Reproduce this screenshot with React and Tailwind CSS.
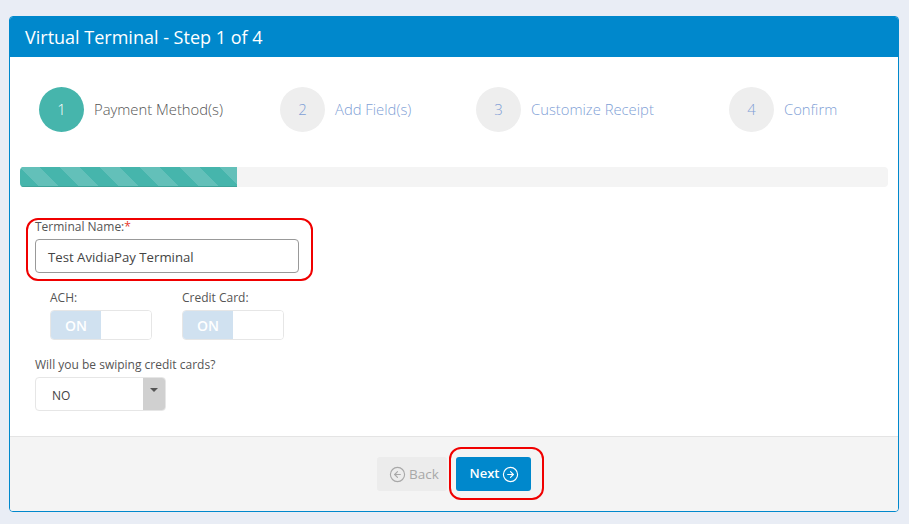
import { CircleArrowLeft, CircleArrowRight } from 'lucide-react';

const steps = [
  { n: 1, label: 'Payment Method(s)', active: true },
  { n: 2, label: 'Add Field(s)' },
  { n: 3, label: 'Customize Receipt' },
  { n: 4, label: 'Confirm' },
];

const Step = ({ n, label, active }) => (
  <div className="flex items-center gap-[10px]">
    <div
      className={
        active
          ? 'w-[45px] h-[45px] rounded-full flex items-center justify-center bg-[#46b5ac] text-white text-[15px] font-light'
          : 'w-[45px] h-[45px] rounded-full flex items-center justify-center bg-[#eeeeee] text-[#7f9fd6] text-[15px] font-light'
      }
    >
      {n}
    </div>
    <span className={active ? 'text-[14.8px] font-light text-[#555555]' : 'text-[14.8px] font-light text-[#7f9fd6]'}>
      {label}
    </span>
  </div>
);

const Toggle = ({ label }) => (
  <div className="w-[102px]">
    <div className="text-[12px] leading-[16px] text-[#555555] mb-[4px]">{label}</div>
    <div className="flex h-[30px] border border-[#e6e6e6] rounded-[4px] overflow-hidden">
      <div className="w-[50px] bg-[#d0e1f0] text-white font-semibold text-[14px] flex items-center justify-center">ON</div>
      <div className="flex-1 bg-white" />
    </div>
  </div>
);

export default function App() {
  return (
    <div className="w-[909px] h-[524px] bg-[#e9edf5] pt-[16px] px-[9px] overflow-hidden font-['Open_Sans',sans-serif]">
      <div className="w-[890px] h-[496px] bg-white border border-[#0088cc] rounded-[4px] flex flex-col overflow-hidden">
        <div className="h-[40px] shrink-0 bg-[#0088cc] text-white text-[18px] leading-[40px] pl-[15px]">
          Virtual Terminal - Step 1 of 4
        </div>

        <div className="flex-1 relative">
          <div className="grid grid-cols-[241px_196px_253px_1fr] pl-[29px] pt-[30px]">
            {steps.map((s) => (
              <Step key={s.n} {...s} />
            ))}
          </div>

          <div className="mx-[10px] mt-[35px] h-[20px] bg-[#f4f4f4] rounded-[4px] overflow-hidden">
            <div className="w-[217px] h-full bg-[#46b5ac] border-b border-[#3ea399] bg-size-[40px_40px] bg-[linear-gradient(45deg,#63c0b9_25%,transparent_25%,transparent_50%,#63c0b9_50%,#63c0b9_75%,transparent_75%,transparent)]" />
          </div>

          <div className="pl-[25px] mt-[31px]">
            <div className="relative w-[264px]">
              <div className="absolute left-[-9px] top-0 w-[287px] h-[63px] border-2 border-[#f00000] rounded-[12px] pointer-events-none" />
              <div className="text-[12px] leading-[16px] text-[#555555] pt-[1px]">
                Terminal Name:<span className="text-[#e8382d]">*</span>
              </div>
              <div className="mt-[4px] h-[34px] border border-[#999999] rounded-[4px] pl-[12px] pt-[3px] flex items-center text-[13.2px] text-[#444444]">
                Test AvidiaPay Terminal
              </div>
            </div>

            <div className="flex gap-[30px] pl-[15px] mt-[17px]">
              <Toggle label="ACH:" />
              <Toggle label="Credit Card:" />
            </div>

            <div className="text-[12px] leading-[16px] text-[#555555] mt-[17px]">Will you be swiping credit cards?</div>
            <div className="mt-[4px] w-[131px] h-[34px] border border-[#e6e6e6] rounded-[4px] overflow-hidden flex">
              <div className="flex-1 pl-[16px] pt-[4px] flex items-center text-[12px] text-[#444444]">NO</div>
              <div className="w-[22px] bg-[#d0d0d0] flex justify-center pt-[10px]">
                <div className="w-0 h-0 border-x-[4px] border-x-transparent border-t-[4px] border-t-[#555555]" />
              </div>
            </div>
          </div>
        </div>

        <div className="h-[75px] shrink-0 bg-[#f4f4f4] border-t border-[#e4e4e4] flex justify-center gap-[9px] pt-[20px]">
          <div className="w-[70px] h-[34px] bg-[#ececec] rounded-[3px] pl-[4px] text-[#a8a8a8] text-[13.5px] flex items-center justify-center gap-[3px]">
            <CircleArrowLeft size={17} strokeWidth={1.6} />
            Back
          </div>
          <div className="relative w-[75px] h-[34px] bg-[#0088cc] rounded-[3px] pl-[2px] text-white text-[13px] font-semibold flex items-center justify-center gap-[3px]">
            <div className="absolute left-[-7px] top-[-10px] w-[95px] h-[53px] border-2 border-[#f00000] rounded-[12px] pointer-events-none" />
            Next
            <CircleArrowRight size={17} strokeWidth={1.6} />
          </div>
        </div>
      </div>
    </div>
  );
}
